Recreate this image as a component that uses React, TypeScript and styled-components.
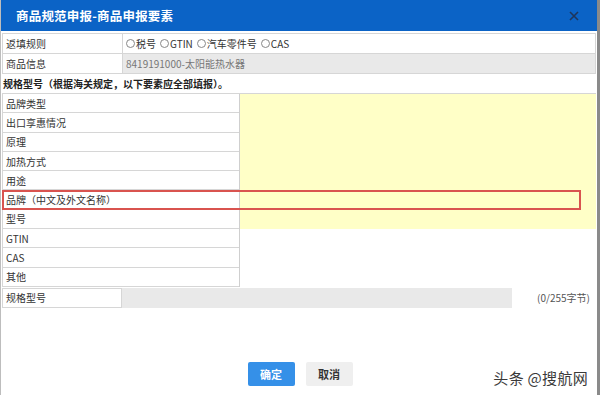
import React from "react";
import styled, { createGlobalStyle } from "styled-components";

const GlobalStyle = createGlobalStyle`
  html, body {
    margin: 0;
    padding: 0;
    background: #8a8a8a;
  }
  body {
    font-family: "Noto Sans CJK SC", "Liberation Sans", sans-serif;
  }
`;

const Dialog = styled.div`
  position: relative;
  width: 597px;
  height: 395px;
  background: #fff;
  box-sizing: border-box;
  border-left: 1px solid #bdbdbd;
  display: flex;
  flex-direction: column;
`;

const Header = styled.div`
  height: 31px;
  background: #0b63c6;
  display: flex;
  align-items: center;
  justify-content: space-between;
  padding: 0 18px 0 15px;
  flex-shrink: 0;
`;

const Title = styled.div`
  color: #fff;
  font-size: 12.5px;
  font-weight: bold;
  letter-spacing: 0.2px;
`;

const Close = styled.div`
  width: 10px;
  height: 10px;
  display: flex;
`;

const Body = styled.div`
  padding: 2px 1px 0 1px;
  font-size: 10px;
  color: #333;
`;

const Table = styled.div`
  border: 1px solid #d6d6d6;
  border-bottom: none;
  width: 594px;
  box-sizing: border-box;
`;

const InfoRow = styled.div`
  display: grid;
  grid-template-columns: 120px 1fr;
  height: 20px;
  border-bottom: 1px solid #d6d6d6;
  box-sizing: border-box;
`;

const Cell = styled.div<{ $bg?: string; $muted?: boolean; $border?: boolean }>`
  display: flex;
  align-items: center;
  padding: 0 3px;
  background: ${(p) => p.$bg || "#fff"};
  color: ${(p) => (p.$muted ? "#777" : "#333")};
  border-right: ${(p) => (p.$border ? "1px solid #d6d6d6" : "none")};
  white-space: nowrap;
`;

const Radio = styled.span`
  display: inline-block;
  width: 7px;
  height: 7px;
  border: 1px solid #888;
  border-radius: 50%;
  margin-right: 1px;
  background: #fff;
`;

const RadioLabel = styled.span`
  display: inline-flex;
  align-items: center;
  margin-right: 4px;
`;

const Notice = styled.div`
  height: 19px;
  display: flex;
  align-items: center;
  font-weight: bold;
  color: #222;
  padding-left: 1px;
`;

const ElementGrid = styled.div`
  position: relative;
  display: grid;
  grid-template-columns: 238px 1fr;
  border-top: 1px solid #d6d6d6;
`;

const Labels = styled.div`
  display: flex;
  flex-direction: column;
  border-right: 1px solid #cfcfcf;
`;

const Label = styled.div`
  height: 19.3px;
  box-sizing: border-box;
  border-bottom: 1px solid #d6d6d6;
  display: flex;
  align-items: center;
  padding-left: 3px;
  border-left: 1px solid #d6d6d6;
`;

const Fill = styled.div`
  display: flex;
  flex-direction: column;
`;

const Yellow = styled.div`
  height: 135px;
  background: #ffffc7;
`;

const Highlight = styled.div`
  position: absolute;
  left: 0;
  top: 96px;
  width: 579px;
  height: 20px;
  box-sizing: border-box;
  border: 2px solid #d9534f;
`;

const SpecRow = styled.div`
  display: grid;
  grid-template-columns: 120px 390px 1fr;
  height: 20px;
  margin-top: 1px;
`;

const SpecLabel = styled.div`
  border: 1px solid #d6d6d6;
  display: flex;
  align-items: center;
  padding-left: 3px;
`;

const SpecInput = styled.div`
  background: #e9e9e9;
`;

const Counter = styled.div`
  display: flex;
  align-items: center;
  justify-content: flex-end;
  padding-right: 6px;
  color: #555;
  font-size: 10px;
`;

const Footer = styled.div`
  display: flex;
  justify-content: center;
  gap: 11px;
  margin-top: 54px;
  padding-left: 2px;
`;

const Button = styled.button<{ $primary?: boolean }>`
  width: 47px;
  height: 24px;
  border: none;
  border-radius: 2px;
  font-family: inherit;
  font-size: 11px;
  font-weight: bold;
  background: ${(p) => (p.$primary ? "#3590e8" : "#efefef")};
  color: ${(p) => (p.$primary ? "#fff" : "#333")};
  padding: 0;
`;

const Watermark = styled.div`
  position: absolute;
  right: 9px;
  bottom: 7px;
  font-size: 15px;
  color: #3a3a3a;
  letter-spacing: 0.3px;
`;

const labels = [
  "品牌类型",
  "出口享惠情况",
  "原理",
  "加热方式",
  "用途",
  "品牌（中文及外文名称）",
  "型号",
  "GTIN",
  "CAS",
  "其他",
];

const radios = ["税号", "GTIN", "汽车零件号", "CAS"];

const App = () => {
  return (
    <>
      <GlobalStyle />
      <Dialog>
        <Header>
          <Title>商品规范申报-商品申报要素</Title>
          <Close>
            <svg width="10" height="10" viewBox="0 0 10 10">
              <path d="M1 1L9 9M9 1L1 9" stroke="#1f3559" strokeWidth="1.6" />
            </svg>
          </Close>
        </Header>
        <Body>
          <Table>
            <InfoRow>
              <Cell $border>返填规则</Cell>
              <Cell>
                {radios.map((r) => (
                  <RadioLabel key={r}>
                    <Radio />
                    {r}
                  </RadioLabel>
                ))}
              </Cell>
            </InfoRow>
            <InfoRow>
              <Cell $border>商品信息</Cell>
              <Cell $bg="#e9e9e9" $muted>
                8419191000-太阳能热水器
              </Cell>
            </InfoRow>
          </Table>
          <Notice>规格型号（根据海关规定，以下要素应全部填报）。</Notice>
          <ElementGrid>
            <Labels>
              {labels.map((l) => (
                <Label key={l}>{l}</Label>
              ))}
            </Labels>
            <Fill>
              <Yellow />
            </Fill>
            <Highlight />
          </ElementGrid>
          <SpecRow>
            <SpecLabel>规格型号</SpecLabel>
            <SpecInput />
            <Counter>(0/255字节)</Counter>
          </SpecRow>
          <Footer>
            <Button $primary>确定</Button>
            <Button>取消</Button>
          </Footer>
        </Body>
        <Watermark>头条 @搜航网</Watermark>
      </Dialog>
    </>
  );
};

export default App;
